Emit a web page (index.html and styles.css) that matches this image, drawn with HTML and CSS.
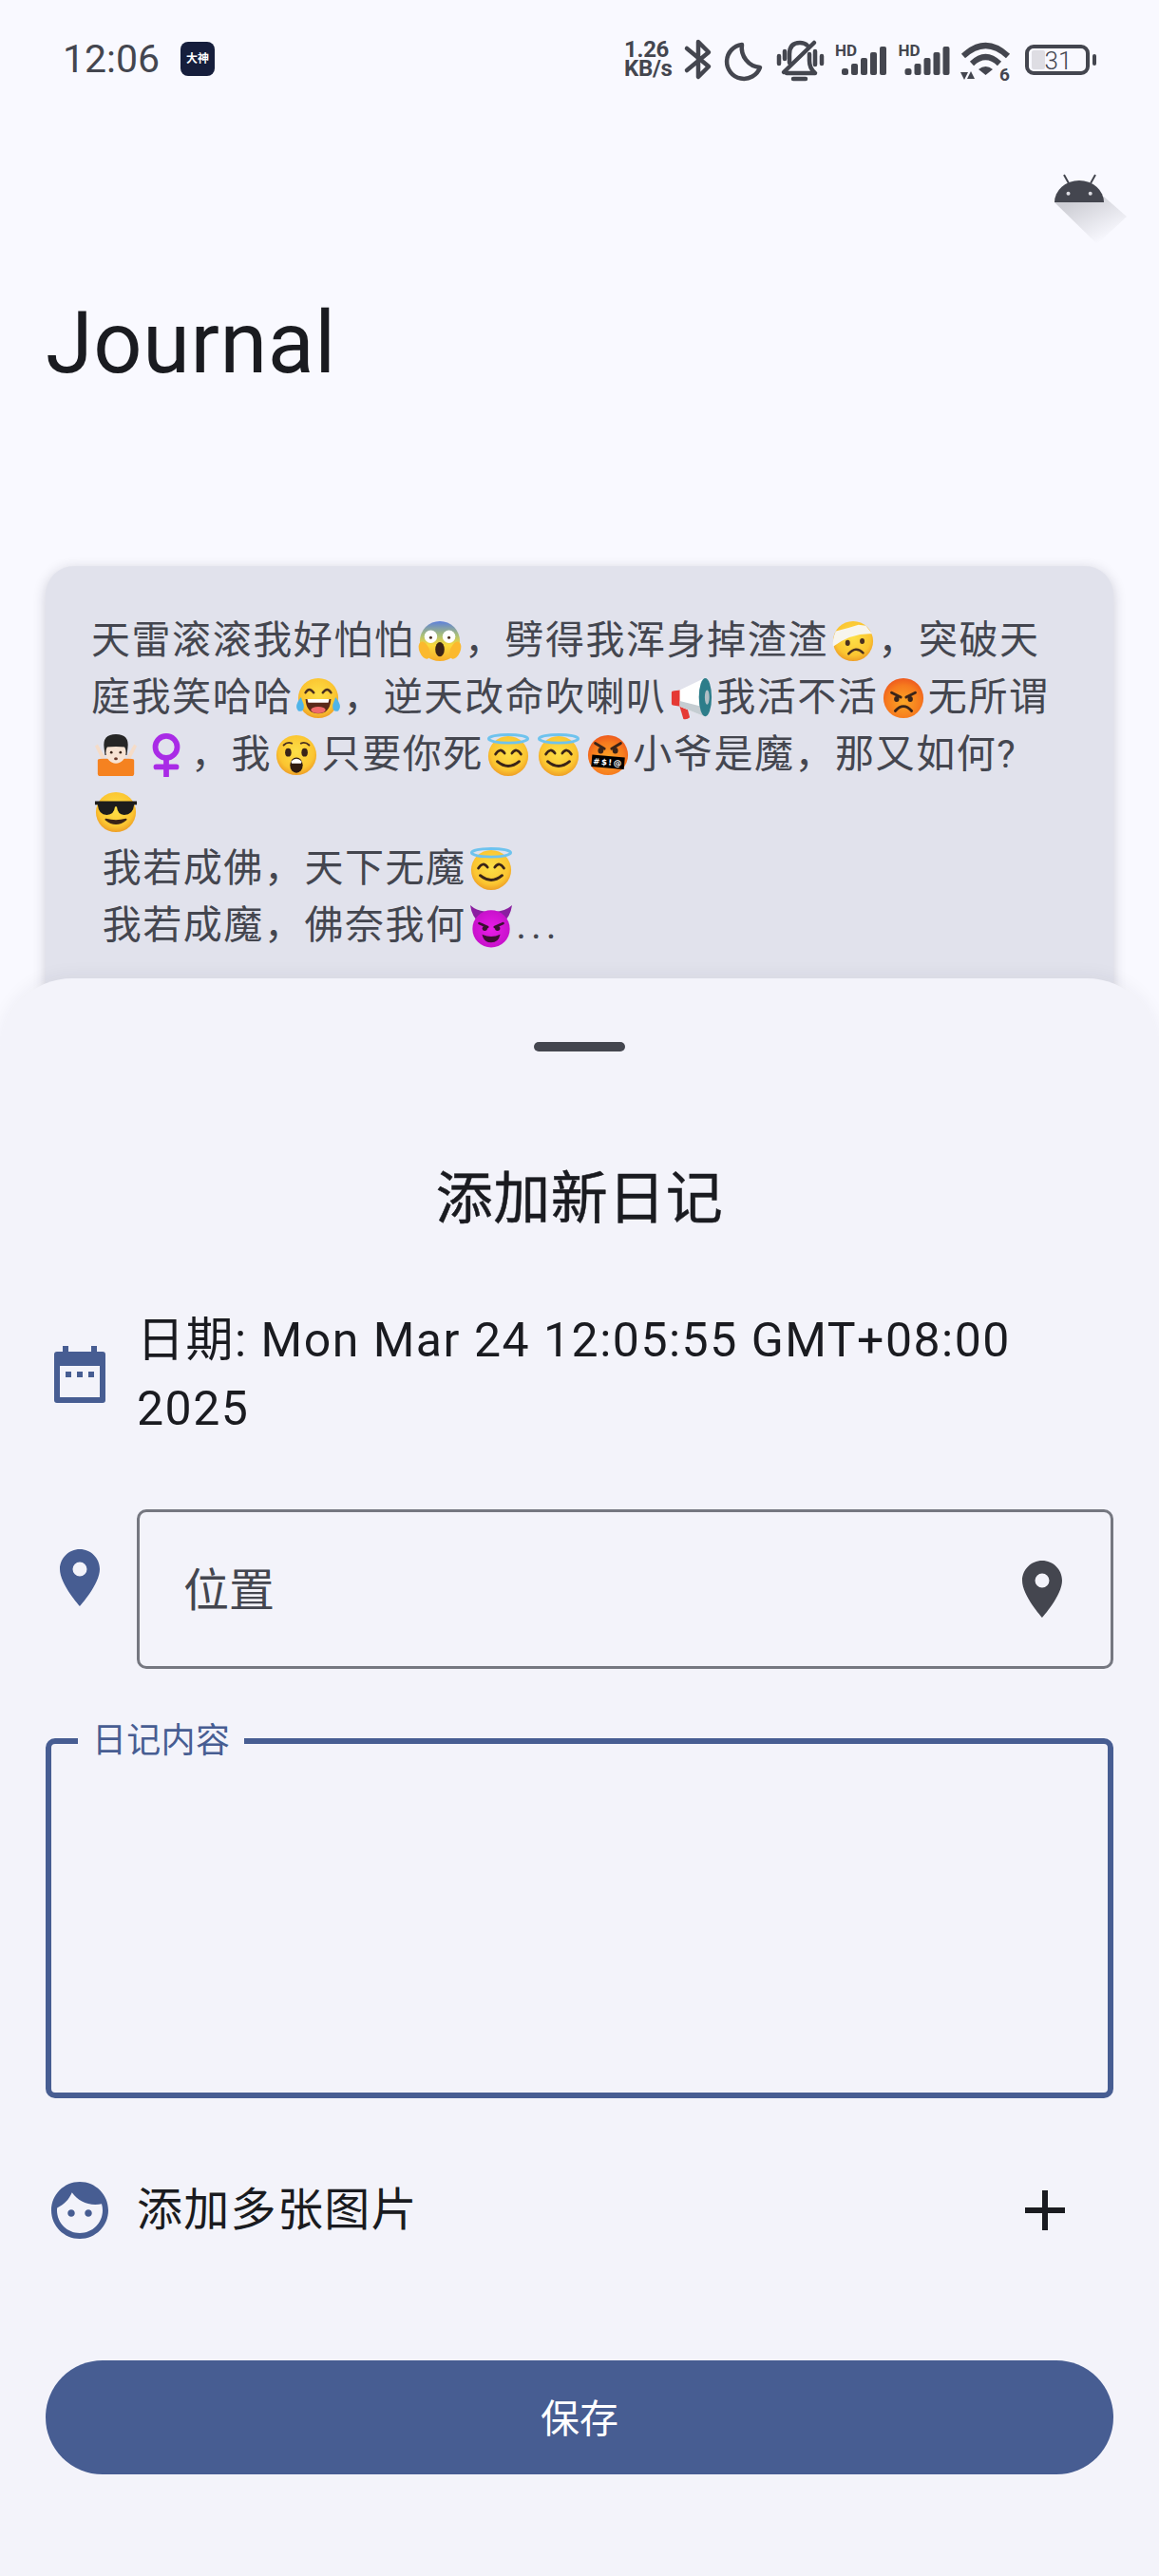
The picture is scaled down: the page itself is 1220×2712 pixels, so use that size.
FILE: index.html
```html
<!DOCTYPE html>
<html>
<head>
    <meta http-equiv="Content-Type" content="text/html; charset=utf-8" />
    <title>Journal</title>
    <link rel="stylesheet" href="styles.css">
</head>
<body>
<svg class="defs" width="0" height="0">
    <defs>
        <radialGradient id="g-yellow" cx="50%" cy="42%" r="58%">
            <stop offset="0" stop-color="#FDE047"/>
            <stop offset=".75" stop-color="#FBC531"/>
            <stop offset="1" stop-color="#EE9F27"/>
        </radialGradient>
        <linearGradient id="g-scream" x1="0" y1="0" x2="0" y2="1">
            <stop offset="0" stop-color="#5C7FDC"/>
            <stop offset=".35" stop-color="#A9C078"/>
            <stop offset=".6" stop-color="#FBD93A"/>
            <stop offset="1" stop-color="#F8AE2B"/>
        </linearGradient>
        <radialGradient id="g-angry" cx="50%" cy="60%" r="60%">
            <stop offset="0" stop-color="#FBA726"/>
            <stop offset=".7" stop-color="#F67A1E"/>
            <stop offset="1" stop-color="#EE5A1E"/>
        </radialGradient>
        <radialGradient id="g-devil" cx="50%" cy="50%" r="55%">
            <stop offset="0" stop-color="#E91CE8"/>
            <stop offset="1" stop-color="#C410C8"/>
        </radialGradient>
        <linearGradient id="g-drop" x1=".25" y1=".1" x2=".8" y2=".85">
            <stop offset="0" stop-color="#44464F" stop-opacity=".24"/>
            <stop offset="1" stop-color="#44464F" stop-opacity="0"/>
        </linearGradient>

        <symbol id="e-scream" viewBox="0 0 48 48">
            <circle cx="24" cy="24" r="22" fill="url(#g-scream)"/>
            <circle cx="14" cy="19" r="7" fill="#fff"/>
            <circle cx="34" cy="19" r="7" fill="#fff"/>
            <circle cx="14" cy="20" r="1.6" fill="#4a3020"/>
            <circle cx="34" cy="20" r="1.6" fill="#4a3020"/>
            <ellipse cx="24" cy="33" rx="5" ry="8" fill="#3a2418"/>
            <ellipse cx="7" cy="34" rx="5.5" ry="10" transform="rotate(-22 7 34)" fill="#FBB92E"/>
            <ellipse cx="41" cy="34" rx="5.5" ry="10" transform="rotate(22 41 34)" fill="#FBB92E"/>
        </symbol>
        <symbol id="e-hurt" viewBox="0 0 48 48">
            <circle cx="24" cy="24" r="22" fill="url(#g-yellow)"/>
            <path d="M2 30 Q1 22 5 13 Q18 10 30 6 L38 7 L45 16 Q22 15 2 30Z" fill="#F7F5EE"/>
            <ellipse cx="18" cy="26" rx="2.6" ry="3.2" fill="#4a3020"/>
            <ellipse cx="34" cy="24" rx="2.6" ry="3.2" fill="#4a3020"/>
            <path d="M19 38 Q27 29 35 37" fill="none" stroke="#4a3020" stroke-width="2.6" stroke-linecap="round"/>
        </symbol>
        <symbol id="e-joy" viewBox="0 0 48 48">
            <circle cx="24" cy="24" r="22" fill="url(#g-yellow)"/>
            <path d="M10 18 Q14 11 19 18 M29 18 Q34 11 38 18" fill="none" stroke="#4a3020" stroke-width="2.6" stroke-linecap="round"/>
            <path d="M10 25 H38 Q37 41 24 41 Q11 41 10 25Z" fill="#5a2a1a"/>
            <path d="M12 25 H36 L35 29 H13Z" fill="#fff"/>
            <ellipse cx="24" cy="37" rx="8" ry="3.6" fill="#F06A6A"/>
            <path d="M5 23 Q-3 33 2 38 Q9 40 8 31Z" fill="#4FB4E8"/>
            <path d="M43 23 Q51 33 46 38 Q39 40 40 31Z" fill="#4FB4E8"/>
        </symbol>
        <symbol id="e-horn" viewBox="0 0 48 48">
            <path d="M10 30 L15 47 Q19 48 22 45 L18 30Z" fill="#E53935"/>
            <path d="M2 18 Q2 16 5 16 L12 15 V33 L5 32 Q2 32 2 30Z" fill="#E53935"/>
            <path d="M11 15 L38 2 V44 L11 33Z" fill="#fff"/>
            <path d="M11 27 L38 34 V44 L11 33Z" fill="#C5CDD2"/>
            <ellipse cx="39" cy="23" rx="7" ry="21" fill="#2D7D8A"/>
            <ellipse cx="41" cy="23" rx="2.5" ry="8" fill="#B0BEC5"/>
        </symbol>
        <symbol id="e-angry" viewBox="0 0 48 48">
            <circle cx="24" cy="24" r="22" fill="url(#g-angry)"/>
            <path d="M11 18 L21 23 M37 18 L27 23" stroke="#3a2418" stroke-width="3" stroke-linecap="round"/>
            <ellipse cx="16.5" cy="25" rx="2.8" ry="3.2" fill="#3a2418"/>
            <ellipse cx="31.5" cy="25" rx="2.8" ry="3.2" fill="#3a2418"/>
            <path d="M15 38 Q24 28 33 38" fill="none" stroke="#3a2418" stroke-width="3" stroke-linecap="round"/>
        </symbol>
        <symbol id="e-shrug" viewBox="0 0 48 48">
            <path d="M4 30 Q4 28 8 28 H40 Q44 28 44 30 V44 Q44 47 41 47 H7 Q4 47 4 44Z" fill="#F58220"/>
            <path d="M1 14 L8 28 L12 26 L4 12Z M47 14 L40 28 L36 26 L44 12Z" fill="#F5DCC8"/>
            <path d="M11 16 Q9 1 24 1 Q39 1 37 16 L36 24 H12Z" fill="#262626"/>
            <ellipse cx="24" cy="21" rx="11" ry="12" fill="#F7E3D3"/>
            <path d="M13 15 Q24 14 35 15 L33 7 H15Z" fill="#262626"/>
            <circle cx="19" cy="21" r="1.4" fill="#3a2418"/>
            <circle cx="29" cy="21" r="1.4" fill="#3a2418"/>
            <ellipse cx="24" cy="28" rx="2" ry="1.6" fill="#6a3a2a"/>
        </symbol>
        <symbol id="e-hush" viewBox="0 0 48 48">
            <circle cx="24" cy="24" r="22" fill="url(#g-yellow)"/>
            <path d="M10 13 Q14 9 19 11 M29 11 Q34 9 38 13" fill="none" stroke="#4a3020" stroke-width="2" stroke-linecap="round"/>
            <ellipse cx="15" cy="21" rx="3.4" ry="4.6" fill="#3a2418"/>
            <ellipse cx="33" cy="21" rx="3.4" ry="4.6" fill="#3a2418"/>
            <ellipse cx="24" cy="35" rx="7" ry="8.5" fill="#2e1a10"/>
            <path d="M18 31 Q24 25 30 31 L29 33 H19Z" fill="#fff"/>
        </symbol>
        <symbol id="e-halo" viewBox="0 0 48 48">
            <circle cx="24" cy="25" r="22" fill="url(#g-yellow)"/>
            <ellipse cx="24" cy="6" rx="21.5" ry="4.5" fill="none" stroke="#6EC3EE" stroke-width="3"/>
            <path d="M10 23 Q15 15 20 22 M28 22 Q33 15 38 23" fill="none" stroke="#3a2418" stroke-width="2.8" stroke-linecap="round"/>
            <path d="M12 31 Q24 41 36 31" fill="none" stroke="#3a2418" stroke-width="3" stroke-linecap="round"/>
        </symbol>
        <symbol id="e-curse" viewBox="0 0 48 48">
            <circle cx="24" cy="24" r="22" fill="url(#g-angry)"/>
            <path d="M10 11 L20 17 M38 11 L28 17" stroke="#3a2418" stroke-width="3" stroke-linecap="round"/>
            <ellipse cx="16" cy="19" rx="3" ry="3.4" fill="#3a2418"/>
            <ellipse cx="32" cy="19" rx="3" ry="3.4" fill="#3a2418"/>
            <g transform="rotate(5 24 32)">
                <rect x="6" y="25" width="36" height="13" fill="#000"/>
                <text x="24" y="35" class="grawl" text-anchor="middle">#$!@</text>
            </g>
        </symbol>
        <symbol id="e-cool" viewBox="0 0 48 48">
            <circle cx="24" cy="24" r="22" fill="url(#g-yellow)"/>
            <path d="M1 12 H47 V16 H44 Q43 27 33 27 Q26 27 25 18 H23 Q22 27 14 27 Q5 27 4 16 H1Z" fill="#1c1c1c"/>
            <path d="M13 32 Q24 41 35 32 Q24 35 13 32Z" fill="#3a2418" stroke="#3a2418" stroke-width="2" stroke-linejoin="round"/>
        </symbol>
        <symbol id="e-devil" viewBox="0 0 48 48">
            <path d="M1 1 Q3 14 11 20 L20 8 Q9 8 1 1Z M47 1 Q45 14 37 20 L28 8 Q39 8 47 1Z" fill="#8A1FA0"/>
            <circle cx="24" cy="27" r="20.5" fill="url(#g-devil)"/>
            <path d="M11 21 L20 25 M37 21 L28 25" stroke="#3a1030" stroke-width="2.8" stroke-linecap="round"/>
            <ellipse cx="17" cy="26.5" rx="2.8" ry="2.6" fill="#3a1030"/>
            <ellipse cx="31" cy="26.5" rx="2.8" ry="2.6" fill="#3a1030"/>
            <path d="M14 33 Q24 38 34 33 Q32 42 24 42 Q16 42 14 33Z" fill="#3a1030"/>
        </symbol>
        <symbol id="i-signal" viewBox="0 0 66 60">
            <text x="7" y="27" class="sig-hd">HD</text>
            <rect x="14" y="40" width="7" height="7" rx="2.5"/>
            <rect x="24" y="35" width="7" height="12" rx="2"/>
            <rect x="34" y="29" width="7" height="18" rx="2"/>
            <rect x="44" y="23" width="7" height="24" rx="2"/>
            <rect x="54" y="17" width="7" height="30" rx="2"/>
        </symbol>
        <symbol id="i-pin" viewBox="0 0 24 24">
            <path d="M12 2C8.13 2 5 5.13 5 9c0 5.25 7 13 7 13s7-7.75 7-13c0-3.87-3.13-7-7-7zm0 9.5a2.5 2.5 0 0 1 0-5 2.5 2.5 0 0 1 0 5z"/>
        </symbol>
    </defs>
</svg>

<div class="screen">
    <div class="status">
        <span class="time">12:06</span>
        <span class="badge">大神</span>
        <div class="status-right">
            <div class="speed"><span>1.26</span><span>KB/s</span></div>
            <svg class="st" width="40" height="60" viewBox="0 0 40 60"><path class="ln" d="M8 19 L31 38 L20 49 V12 L31 23 L8 42"/></svg>
            <svg class="st" width="55" height="60" viewBox="0 0 55 60"><path class="ln" d="M26 15 A18 18 0 1 0 45 39 A21 21 0 0 1 26 15Z"/></svg>
            <svg class="st" width="62" height="60" viewBox="0 0 62 60">
                <path class="ln" d="M21 34 V25 Q21 13 32 13 Q37 13 40 16 M42 25 V32 Q42 40 48 45 H18 M15 44 L47 13 M10 27 V35 M16 22 V30 M48 22 V36 M55 27 V35"/>
                <path class="ln" d="M25 51 H38"/>
            </svg>
            <svg class="st" width="66" height="60"><use href="#i-signal"/></svg>
            <svg class="st" width="67" height="60"><use href="#i-signal"/></svg>
            <svg class="st" width="66" height="60" viewBox="0 0 66 60">
                <path class="ln ln-wifi" d="M9 27 Q32.5 5 56 27 M18 35 Q32.5 21 47 35"/>
                <path d="M25 41 Q32.5 35 40 41 L32.5 47Z"/>
                <path d="M6 44 H14 L10 52Z M13 51 H21 L17 43Z"/>
                <text x="47" y="53" class="wifi-num">6</text>
            </svg>
            <svg class="st" width="89" height="60" viewBox="0 0 89 60">
                <rect x="15" y="21" width="14" height="20" rx="2" fill="#DEDDE3"/>
                <rect x="10" y="17" width="64" height="28" rx="7" fill="none" stroke="#44464F" stroke-width="4"/>
                <rect x="79" y="25" width="4" height="12" rx="2"/>
                <text x="43" y="41" class="batt-num" text-anchor="middle">31</text>
            </svg>
        </div>
    </div>

    <div class="appbar">
        <svg class="robot" width="90" height="90" viewBox="0 0 90 90">
            <path d="M5 33 L50 77 L81 48 L57 27Z" fill="url(#g-drop)"/>
            <path d="M5 33 A26 23 0 0 1 57 33Z" fill="#44464F"/>
            <path d="M15 4 L20 13 M48 4 L43 13" stroke="#44464F" stroke-width="2"/>
            <circle cx="19.500" cy="23.700" r="2" fill="#DCDCE2"/>
            <circle cx="42.700" cy="23.700" r="2" fill="#DCDCE2"/>
        </svg>
    </div>
    <h1 class="page-title">Journal</h1>

    <div class="card">
        天雷滚滚我好怕怕<svg class="emo"><use href="#e-scream"/></svg>，劈得我浑身掉渣渣<svg class="emo"><use href="#e-hurt"/></svg>，突破天<br>
        庭我笑哈哈<svg class="emo"><use href="#e-joy"/></svg>，逆天改命吹喇叭<svg class="emo"><use href="#e-horn"/></svg>我活不活<svg class="emo"><use href="#e-angry"/></svg>无所谓<br>
        <svg class="emo"><use href="#e-shrug"/></svg><svg class="emo venus" viewBox="0 0 48 48"><circle cx="24" cy="15" r="12" fill="none" stroke="#A92BE6" stroke-width="6"/><path d="M24 27 V47 M13 37 H35" stroke="#A92BE6" stroke-width="6" stroke-linecap="round"/></svg>，我<svg class="emo"><use href="#e-hush"/></svg>只要你死<svg class="emo"><use href="#e-halo"/></svg><svg class="emo"><use href="#e-halo"/></svg><svg class="emo"><use href="#e-curse"/></svg>小爷是魔，那又如何?<br>
        <svg class="emo"><use href="#e-cool"/></svg><br>
        &nbsp;我若成佛，天下无魔<svg class="emo"><use href="#e-halo"/></svg><br>
        &nbsp;我若成魔，佛奈我何<svg class="emo"><use href="#e-devil"/></svg><span class="dots">...</span>
    </div>

    <div class="sheet">
        <div class="handle"></div>
        <h2 class="sheet-title">添加新日记</h2>

        <div class="row row-date">
            <svg class="ic" viewBox="0 0 72 72">
                <path d="M18 6 H24 V12 H48 V6 H54 V12 H60 Q63 12 63 15 V63 Q63 66 60 66 H12 Q9 66 9 63 V15 Q9 12 12 12 H18Z M15 27 V60 H57 V27Z"/>
                <path d="M21 33 H27 V39 H21Z M33 33 H39 V39 H33Z M45 33 H51 V39 H45Z"/>
            </svg>
            <div class="date-text">日期: Mon Mar 24 12:05:55 GMT+08:00 2025</div>
        </div>

        <div class="row row-place">
            <svg class="ic ic-place"><use href="#i-pin"/></svg>
            <div class="field">
                <span class="field-text">位置</span>
                <svg class="ic ic-field"><use href="#i-pin"/></svg>
            </div>
        </div>

        <fieldset class="content">
            <legend>日记内容</legend>
        </fieldset>

        <div class="row row-images">
            <svg class="ic" viewBox="0 0 24 24"><path d="M9 11.750c-.69 0-1.250.56-1.250 1.250s.56 1.250 1.250 1.250 1.250-.56 1.250-1.250-.56-1.250-1.250-1.250zm6 0c-.69 0-1.250.56-1.250 1.250s.56 1.250 1.250 1.250 1.250-.56 1.250-1.250-.56-1.250-1.250-1.250zM12 2C6.480 2 2 6.480 2 12s4.480 10 10 10 10-4.480 10-10S17.520 2 12 2zm0 18c-4.410 0-8-3.590-8-8 0-.29.02-.58.05-.86 2.360-1.050 4.230-2.980 5.210-5.370C11.070 8.330 14.050 10 17.420 10c.78 0 1.530-.09 2.250-.26.21.71.33 1.470.33 2.260 0 4.410-3.590 8-8 8z"/></svg>
            <span class="images-label">添加多张图片</span>
            <svg class="ic ic-add" viewBox="0 0 24 24"><path d="M19 13h-6v6h-2v-6H5v-2h6V5h2v6h6v2z"/></svg>
        </div>

        <button class="save">保存</button>
    </div>
</div>
</body>
</html>
```

FILE: styles.css
```css
*{ margin: 0; padding: 0; box-sizing: border-box;}
html,body{ background: #F9F9FF;}
body{ font-family: Roboto, "Noto Sans CJK SC", sans-serif; color: #1A1B20;}
.defs{ position: absolute;}

.screen{ position: relative; width: 1220px; height: 2712px; overflow: hidden; background: #F9F9FF;}

/* status bar */
.status{ display: flex; align-items: center; height: 122px; padding: 2px 60px 0 66px; color: #44464F;}
.time{ font-size: 41px; width: 124px; line-height: 60px;}
.badge{ width: 36px; height: 36px; border-radius: 8px; background: #161E3C; color: #fff; font-size: 12px; font-weight: 700; text-align: center; line-height: 36px; white-space: nowrap;}
.status-right{ display: flex; align-items: center; margin-left: auto;}
.speed{ display: flex; flex-direction: column; width: 58px; font-size: 24px; font-weight: 700; line-height: 20px; letter-spacing: -.3px; color: #44464F;}
.st{ display: block; fill: #44464F;}
.ln{ fill: none; stroke: #44464F; stroke-width: 4.500; stroke-linecap: round; stroke-linejoin: round;}
.ln-wifi{ stroke-width: 6; stroke-linecap: butt;}
.sig-hd{ font: 700 17px Roboto, sans-serif; fill: #44464F;}
.wifi-num{ font: 700 19px Roboto, sans-serif; fill: #44464F;}
.batt-num{ font: 300 26px Roboto, sans-serif; fill: #44464F;}
.grawl{ font: 700 9px "DejaVu Sans", sans-serif; fill: #fff;}

/* app bar */
.appbar{ display: flex; justify-content: flex-end; margin-top: 58px; padding-right: 25px;}
.robot{ display: block;}
.page-title{ margin: 42px 0 0 48px; font-size: 90px; line-height: 100px; font-weight: 400; letter-spacing: .6px; color: #1A1B20;}

/* card behind the sheet */
.card{ margin: 184px 48px 0; height: 640px; padding: 48px 48px 0; border-radius: 30px; background: #E1E2EC; box-shadow: 0 3px 14px rgba(30,32,50,.2); font-size: 41px; line-height: 60px; letter-spacing: 1.550px; color: #44464F; white-space: nowrap;}
.emo{ display: inline-block; width: 46px; height: 46px; margin: 0 3.250px; vertical-align: -10px;}
.dots{ letter-spacing: 5px;}

/* bottom sheet */
.sheet{ position: absolute; left: 0; right: 0; top: 1030px; bottom: 0; padding: 67px 48px 0; border-radius: 76px 76px 0 0; background: #F3F3FA; box-shadow: 0 -4px 18px rgba(30,32,50,.05);}
.handle{ width: 96px; height: 10px; margin: 0 auto; border-radius: 5px; background: #44464F;}
.sheet-title{ margin-top: 116px; font-size: 60px; line-height: 80px; font-weight: 400; -webkit-text-stroke: .5px #1A1B20; letter-spacing: .5px; text-align: center; color: #1A1B20;}

.row{ display: flex; align-items: center; gap: 24px;}
.ic{ display: block; flex: none; width: 72px; height: 72px; fill: #475D92;}
.row-date{ margin-top: 72px;}
.date-text{ font-size: 50px; line-height: 72px; letter-spacing: 1.500px; color: #1A1B20;}
.row-place{ margin-top: 70px; align-items: flex-start;}
.ic-place{ margin-top: 36px;}
.field{ flex: 1; display: flex; align-items: center; justify-content: space-between; height: 168px; padding: 0 36px 0 46px; border: 3px solid #757780; border-radius: 10px; color: #44464F;}
.field-text{ padding-bottom: 6px; font-size: 48px;}
.ic-field{ fill: #44464F;}

.content{ display: block; min-width: 0; height: 397px; margin-top: 55px; border: 6px solid #475D92; border-radius: 10px;}
.content legend{ margin-left: 28px; padding: 0 15px; font-size: 36px; line-height: 42px; letter-spacing: .3px; color: #475D92;}

.row-images{ margin-top: 82px;}
.images-label{ font-size: 48px; line-height: 60px; letter-spacing: 1.300px; color: #1A1B20;}
.ic-add{ margin-left: auto; margin-right: 36px; fill: #1A1B20;}

.save{ display: block; width: 100%; height: 120px; margin-top: 122px; padding-bottom: 4px; border: 0; border-radius: 60px; background: #475D92; color: #fff; font-family: Roboto, "Noto Sans CJK SC", sans-serif; font-size: 41px;}
```
